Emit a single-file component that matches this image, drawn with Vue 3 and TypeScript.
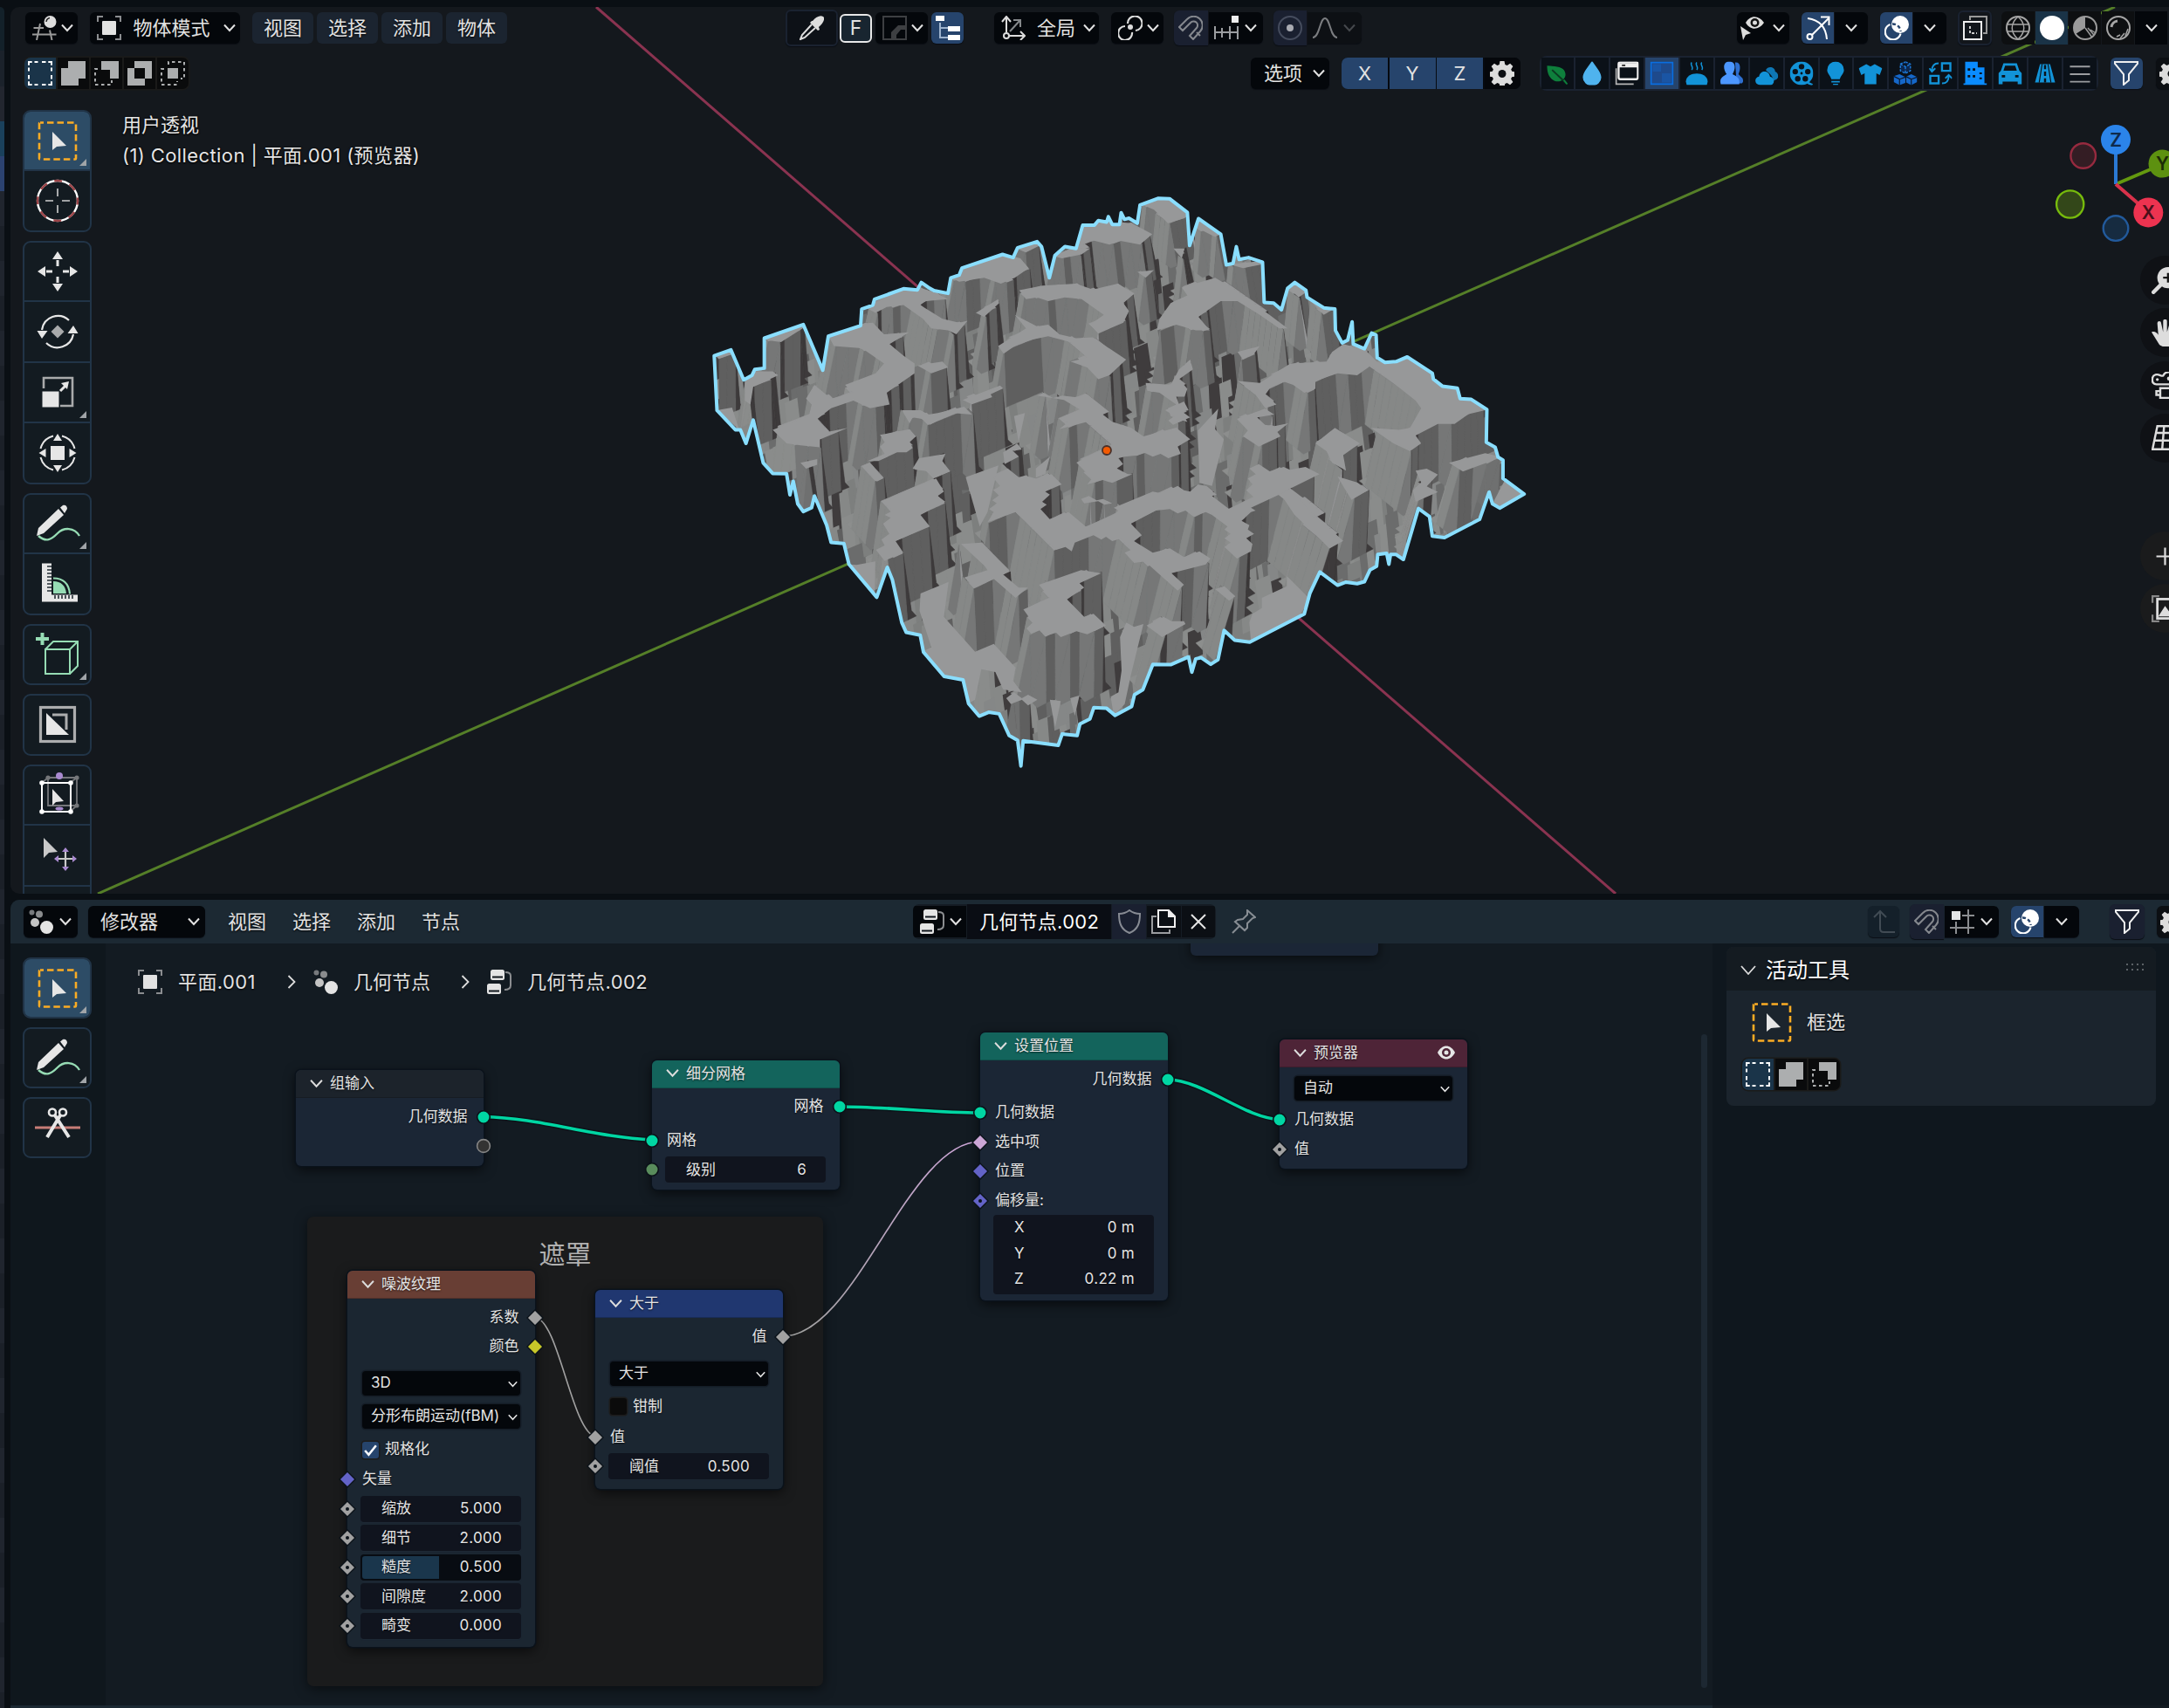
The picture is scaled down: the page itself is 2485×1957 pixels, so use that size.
<script setup lang="ts">
type Pt = [number, number]

/* ---------- terrain mesh ---------- */
const N = 64

function parse(s: string): Pt[] {
  return s.trim().split(/\s+/).map(p => p.split(',').map(Number) as Pt)
}
// detail shapes use a finer local grid over the lower middle of the terrain
function parseDetail(s: string): Pt[] {
  return parse(s).map(([x, y]) => [282.2 + 0.56 * x, 537.6 + 0.7467 * y] as Pt)
}

function homography(p0: Pt, p1: Pt, p2: Pt, p3: Pt) {
  const dx1 = p1[0] - p2[0], dx2 = p3[0] - p2[0], dx3 = p0[0] - p1[0] + p2[0] - p3[0]
  const dy1 = p1[1] - p2[1], dy2 = p3[1] - p2[1], dy3 = p0[1] - p1[1] + p2[1] - p3[1]
  const den = dx1 * dy2 - dx2 * dy1
  const g = (dx3 * dy2 - dx2 * dy3) / den
  const h = (dx1 * dy3 - dx3 * dy1) / den
  return (u: number, v: number): Pt => {
    const w = g * u + h * v + 1
    return [
      ((p1[0] - p0[0] + g * p1[0]) * u + (p3[0] - p0[0] + h * p3[0]) * v + p0[0]) / w,
      ((p1[1] - p0[1] + g * p1[1]) * u + (p3[1] - p0[1] + h * p3[1]) * v + p0[1]) / w,
    ]
  }
}

const ground = homography([55, 600], [611, 1518], [1515, 820], [878, 146])
const raised = homography([62, 463], [620, 1370], [1530, 680], [872, 55])

const plateaus: Pt[][] = [
  '825,75 860,56 880,56 912,97 905,112 875,125 850,90',
  '722,130 770,120 810,125 847,153 825,180 790,170 770,180 730,165 718,190 700,195',
  '670,210 700,190 735,190 720,205 685,215',
  '500,240 578,203 610,215 625,240 600,265 575,280 545,265 500,275 485,265',
  '603,190 640,170 645,182 620,200',
  '608,297 650,285 710,280 740,295 785,280 815,305 795,330 805,350 795,380 750,408 735,385 760,360 720,320 690,315 660,325 640,315 620,320',
  '330,340 400,293 430,290 460,305 480,320 440,325 430,335 470,370 500,380 515,375 495,410 480,400 450,395 435,370 400,335 370,340 350,355',
  '265,413 330,382 345,380 365,410 410,405 375,435 400,465 420,485 420,510 380,550 370,560 375,590 340,600 310,580 270,600 245,628 265,660 300,650 250,680 250,700 215,695 190,690 165,655 230,620 235,590 225,575 240,540 270,575 310,560 295,540 350,510 365,485 330,450 320,445 275,440',
  '425,490 470,480 480,495 450,510',
  '150,416 218,383 222,392 180,430 155,425',
  '58,465 90,448 95,460 68,470',
  '115,525 135,505 165,505 175,515 130,545 125,590 115,580',
  '570,440 620,395 600,360 640,390 660,385 680,410 710,420 740,418 800,475 770,515 750,525 730,495 700,480 730,470 700,430 660,415 610,430 580,460',
  '900,290 960,265 990,290 1020,320 1090,395 1075,395 1040,360 1000,325 970,325 930,365 950,400 925,400 890,385 855,400 860,370 880,330 910,310',
  '835,535 880,540 895,500 915,475 920,500 895,525 910,550 905,570 890,570 900,610 910,635 880,620 875,600 890,590 860,560 838,555',
  '1000,530 1040,535 1095,485 1160,480 1170,455 1190,435 1230,450 1250,480 1280,485 1305,465 1350,512 1398,548 1398,572 1425,577 1450,603 1415,615 1390,640 1360,640 1320,670 1330,690 1310,710 1280,690 1240,650 1290,655 1310,650 1330,600 1320,580 1240,490 1215,515 1180,510 1140,530 1140,550 1120,560 1100,540 1080,530 1060,545 1050,565 1070,590 1050,600 1030,560',
  '1000,455 1040,440 1030,460 1010,475',
  '1078,815 1095,805 1155,870 1135,870 1190,940 1165,960 1140,920',
  '1140,690 1175,650 1220,690 1190,720 1195,760 1170,740 1160,710',
  '1320,760 1340,755 1360,770 1340,800 1360,815 1320,840 1315,810 1330,790',
  '1380,740 1445,715 1475,725 1405,762',
  '1180,775 1215,790 1235,810 1205,835 1190,800',
  '820,250 850,245 835,265',
  '925,110 970,150 960,160 925,135',
  '985,230 1045,222 1045,230 1010,240',
  '1090,290 1103,275 1125,300 1110,315',
  '1125,315 1175,343 1155,360',
  '215,740 245,730 245,745 225,755',
  '530,355 570,320 572,330 545,365',
  '885,190 905,190 900,215',
].map(parse).concat([
  '400,55 520,5 530,15 490,35 495,45 430,70',
  '205,90 265,90 290,105 320,100 405,78 430,105 370,100 295,140 270,120 240,115 230,135',
  '135,175 230,155 250,180 230,200 240,220 220,235 190,235 130,265 95,265 150,240 135,215 150,200',
  '80,285 110,280 145,325 125,335',
  '240,290 260,255 345,240 335,265 360,300 315,320 290,300 250,295',
  '145,405 315,325 340,370 320,385 345,405 265,450 295,490 185,540 210,580 150,608 122,570 150,555 140,535 165,515 145,480 170,460 150,450 175,435',
  '530,235 575,205 590,225 560,230 580,250 535,275',
  '497,320 545,290 580,320 600,315 635,325 685,310 718,345 665,370 680,380 655,405 670,415 650,430 680,465 740,440 795,490 885,450 900,435 885,425 1010,370 1035,375 1060,365 1090,350 1110,365 1130,370 1155,345 1180,350 1215,380 1200,385 1255,430 1335,390 1310,365 1330,345 1315,325 1340,310 1320,290 1350,275 1385,300 1430,285 1450,295 1500,285 1545,310 1450,360 1420,378 1325,425 1340,435 1325,440 1295,470 1320,485 1315,500 1335,515 1310,530 1330,550 1325,575 1280,600 1240,560 1260,545 1240,530 1260,515 1240,500 1250,490 1200,450 1180,440 1140,455 1115,435 1090,445 1065,430 1020,435 940,480 975,520 950,540 1010,580 1065,565 1110,595 1160,575 1195,600 1180,620 1070,650 1110,690 1090,710 985,610 950,615 920,580 940,570 910,530 880,540 860,525 845,535 820,520 760,545 750,575 730,560 700,570 570,440 480,475 500,440 485,430 510,410 495,400 520,380 500,365 520,350',
  '1420,378 1450,362 1520,440 1510,448 1568,480 1568,555 1465,450',
  '765,270 830,235 870,215 880,205 800,130 710,155 740,130 715,120 780,90 725,55 640,40 660,30 690,48 720,40 760,45 800,35 870,95 850,105 880,130 940,150 980,180 1085,150 1130,190 1090,215 1100,240 1060,255 1035,240 1010,250 985,237 960,245 920,250 900,255 915,275 895,290 930,310 945,310 880,340 850,330 800,345 815,325',
  '780,395 805,385 830,400 850,395 880,410 855,415 835,403 790,410',
  '395,550 460,545 550,640 530,655 580,700 610,700 570,735 500,670 440,700 405,665 480,640 470,625',
  '645,690 780,640 845,650 775,685 790,700 735,740 790,800 820,790 860,830 800,860 765,850 715,870 700,855 670,865 650,845 620,858 605,840 625,820 595,775 680,735',
  '990,830 1045,800 1070,815 1110,815 1115,825 1040,870',
  '1210,705 1240,695 1275,730 1255,745',
  '540,1080 565,1060 590,1080 610,1068 640,1085 610,1105 590,1085 555,1100',
  '1280,120 1370,85 1400,105 1345,115 1370,140 1400,145 1445,135 1410,165 1420,180 1350,215 1300,180 1315,160',
  '1050,90 1110,60 1125,90 1105,95 1130,115 1075,140 1060,125 1080,110',
].map(parseDetail))

const join = (poly: Pt[]) => poly.map(p => p.join(',')).join(' ')

// flat valley floor left in the open
const floors: string[] = [
  '410,320 515,280 480,440 455,490',
  '265,720 355,680 340,800 440,920 500,893 570,975 562,1020 590,1060 530,1050 505,990 460,980 440,1085 415,1100 400,1040 340,1005 270,920 300,905 262,780',
  '1155,160 1220,85 1210,155 1238,190 1200,350 1160,340',
  '1330,790 1360,770 1360,735 1440,695 1440,660 1515,740 1475,805 1325,887 1320,820',
  '905,870 925,820 950,835 980,825 940,1000 920,1100 885,1140 875,1075 900,1060 910,985',
  '35,620 60,622 120,610 118,730 122,737',
  '565,110 600,100 580,200',
  '635,290 680,250 665,310 635,322',
  '680,1085 715,1090 697,1180',
  '745,1080 775,1070 760,1140',
].map(s => join(parseDetail(s))).concat([
  '1480,785 1515,820 1471,856 1458,845',
  '65,605 92,598 105,655',
])

function nearOrInside(p: Pt, poly: Pt[], tol: number): boolean {
  let inside = false
  for (let i = 0, j = poly.length - 1; i < poly.length; j = i++) {
    const [xi, yi] = poly[i], [xj, yj] = poly[j]
    if (yi > p[1] !== yj > p[1] && p[0] < ((xj - xi) * (p[1] - yi)) / (yj - yi) + xi) inside = !inside
    const dx = xj - xi, dy = yj - yi
    const t = Math.max(0, Math.min(1, ((p[0] - xi) * dx + (p[1] - yi) * dy) / (dx * dx + dy * dy || 1)))
    if (Math.hypot(p[0] - xi - t * dx, p[1] - yi - t * dy) < tol) return true
  }
  return inside
}

const high: boolean[][] = []
for (let i = 0; i <= N; i++) {
  high.push([])
  for (let j = 0; j <= N; j++) {
    const p = raised(i / N, j / N)
    high[i].push(plateaus.some(poly => nearOrInside(p, poly, 4.5)))
  }
}

// wall tones by facing direction, every 45 degrees from +u
const tones = ['#5f5f5f', '#3d3a3b', '#3d3a3b', '#6f7070', '#8a8c8b', '#8c8e8d', '#868887', '#767777']

interface Face { d: string; c: string }

// deep walls between the plateaus, as uneven vertical slivers
let seed = 7
const rnd = () => (seed = (seed * 16807) % 2147483647) / 2147483647
const slivers: Face[] = []
const deep = ['#868887', '#7d7f7e', '#8a8c8b', '#5f5f5f', '#868887', '#6b6c6c', '#8a8c8b', '#5f5f5f', '#3f3c3d', '#858787']
for (let y = 20; y < 1500; y += 85) {
  let x = 40
  while (x < 1520) {
    const w = 9 + rnd() * 20
    const top = y + rnd() * 60
    const len = 110 + rnd() * 90
    const lean = 6 + rnd() * 12
    slivers.push({
      d: `M${x.toFixed(1)} ${top.toFixed(1)}l${w.toFixed(1)} ${(-w * 0.6).toFixed(1)}l${lean.toFixed(1)} ${len.toFixed(1)}h${(-w - 3).toFixed(1)}z`,
      c: deep[Math.floor(rnd() * deep.length)],
    })
    x += w * 0.8
  }
}

const faces: Face[] = []
for (let i = 0; i < N; i++) {
  for (let j = N - 1; j >= 0; j--) {
    const at = (a: number, b: number): Pt => (high[a][b] ? raised : ground)(a / N, b / N)
    const h = [high[i][j], high[i + 1][j], high[i + 1][j + 1], high[i][j + 1]].map(Number)
    if (!(h[0] + h[1] + h[2] + h[3])) continue
    const nu = h[0] + h[3] - h[1] - h[2]
    const nv = h[0] + h[1] - h[2] - h[3]
    let c = '#979899'
    if (nu || nv) c = tones[(Math.round(Math.atan2(nv, nu) / (Math.PI / 4)) + 8) % 8]
    const q = [at(i, j), at(i + 1, j), at(i + 1, j + 1), at(i, j + 1)]
    const d = 'M' + q.map(p => p[0].toFixed(1) + ' ' + p[1].toFixed(1)).join('L') + 'Z'
    const last = faces[faces.length - 1]
    if (last && last.c === c) last.d += d
    else faces.push({ d, c })
  }
}
const tops = plateaus.map(join)

const outline =
  '60,465 90,450 113,527 128,515 133,500 150,497 150,420 220,385 255,502 265,415 323,388 325,345 345,335 348,320 400,293 425,296 432,277 445,290 455,298 480,305 485,265 500,258 505,240 578,205 597,213 605,188 640,172 648,185 662,265 672,208 690,185 710,190 722,130 743,130 750,118 765,122 768,108 775,128 788,128 791,98 797,115 805,112 820,125 825,78 858,61 878,62 910,97 914,182 930,113 970,153 980,232 992,228 998,185 1003,218 1020,213 1045,225 1048,328 1065,330 1079,347 1090,292 1103,277 1123,297 1125,315 1155,342 1175,345 1176,400 1188,432 1198,425 1206,378 1208,435 1228,447 1241,407 1249,412 1251,470 1265,482 1285,480 1305,468 1350,510 1352,525 1368,543 1395,548 1400,575 1420,577 1448,603 1447,687 1463,700 1468,725 1477,733 1477,780 1515,820 1471,856 1458,845 1452,815 1435,885 1372,932 1350,928 1345,878 1325,857 1298,988 1285,975 1275,975 1272,1000 1268,972 1252,975 1250,1005 1238,1015 1228,1045 1215,1050 1195,1046 1180,1054 1148,1020 1130,1075 1120,1128 1022,1200 995,1195 976,1170 965,1245 952,1257 935,1240 925,1243 918,1277 912,1238 880,1258 848,1257 830,1322 815,1335 810,1365 780,1388 765,1370 742,1368 735,1397 717,1410 712,1440 685,1436 678,1465 615,1453 611,1518 605,1452 590,1440 572,1384 553,1380 536,1390 517,1358 507,1297 473,1288 436,1226 430,1182 405,1175 397,1150 380,1040 371,1008 352,1085 302,1000 293,947 270,944 262,900 240,825 235,855 220,865 210,845 202,787 196,822 190,768 165,767 148,740 130,630 117,690 107,655 98,655 65,605'

/* ---------- toolbars ---------- */
interface Tool { icon: string; more?: boolean; on?: boolean }
const viewTools: Tool[][] = [
  [{ icon: 't-box', more: true, on: true }, { icon: 't-cursor' }],
  [{ icon: 't-move' }, { icon: 't-rotate' }, { icon: 't-scale', more: true }, { icon: 't-transform' }],
  [{ icon: 't-annotate', more: true }, { icon: 't-measure' }],
  [{ icon: 't-cube', more: true }],
  [{ icon: 't-plane' }],
  [{ icon: 't-cage' }, { icon: 't-push' }, { icon: 't-none' }],
]
const nodeTools: Tool[][] = [
  [{ icon: 't-box', more: true, on: true }],
  [{ icon: 't-annotate', more: true }],
  [{ icon: 't-cut' }],
]
const viewMenus = ['视图', '选择', '添加', '物体']
const nodeMenus = ['视图', '选择', '添加', '节点']
const selectModes = ['s-new', 's-add', 's-sub', 's-xor', 's-and']
const categories = ['leaf', 'drop', 'window', 'tile', 'steam', 'people', 'cloud', 'film', 'bulb', 'shirt', 'cubes', 'swap', 'building', 'car', 'road', 'lines']

/* ---------- node graph ---------- */
interface Row {
  kind: 'out' | 'in' | 'field' | 'drop' | 'check'
  label?: string
  value?: string
  sock?: 'dot' | 'dia' | 'ring' | 'none'
  color?: string
  on?: boolean
  fill?: number
  gap?: boolean
}
interface NodeBox {
  title: string; cls: string; x: number; y: number; h: number; rows: Row[]
  vec?: [string, string][]; eye?: boolean
}
const geo = '#00d6a3', grey = '#a1a1a1', vecc = '#6363c7'
const nodes: NodeBox[] = [
  { title: '组输入', cls: 'plain', x: 339, y: 1226, h: 110, rows: [
    { kind: 'out', label: '几何数据', sock: 'dot', color: geo },
    { kind: 'out', label: '', sock: 'ring', color: '#333' }] },
  { title: '细分网格', cls: 'teal', x: 747, y: 1214.5, h: 148, rows: [
    { kind: 'out', label: '网格', sock: 'dot', color: geo },
    { kind: 'in', label: '网格', sock: 'dot', color: geo, gap: true },
    { kind: 'field', label: '级别', value: '6', sock: 'dot', color: '#598c5c' }] },
  { title: '设置位置', cls: 'teal', x: 1123, y: 1183, h: 307, rows: [
    { kind: 'out', label: '几何数据', sock: 'dot', color: geo },
    { kind: 'in', label: '几何数据', sock: 'dot', color: geo, gap: true },
    { kind: 'in', label: '选中项', sock: 'dia', color: '#cca6d6' },
    { kind: 'in', label: '位置', sock: 'dia', color: vecc },
    { kind: 'in', label: '偏移量:', sock: 'dia', color: vecc, on: true }],
    vec: [['X', '0 m'], ['Y', '0 m'], ['Z', '0.22 m']] },
  { title: '预览器', cls: 'wine', x: 1466, y: 1191, h: 148, eye: true, rows: [
    { kind: 'drop', label: '自动' },
    { kind: 'in', label: '几何数据', sock: 'dot', color: geo },
    { kind: 'in', label: '值', sock: 'dia', color: grey, on: true }] },
  { title: '噪波纹理', cls: 'rust', x: 398, y: 1456, h: 430.5, rows: [
    { kind: 'out', label: '系数', sock: 'dia', color: grey },
    { kind: 'out', label: '颜色', sock: 'dia', color: '#c7c729' },
    { kind: 'drop', label: '3D', gap: true },
    { kind: 'drop', label: '分形布朗运动(fBM)' },
    { kind: 'check', label: '规格化', on: true },
    { kind: 'in', label: '矢量', sock: 'dia', color: vecc },
    { kind: 'field', label: '缩放', value: '5.000', sock: 'dia', color: grey, on: true },
    { kind: 'field', label: '细节', value: '2.000', sock: 'dia', color: grey, on: true },
    { kind: 'field', label: '糙度', value: '0.500', sock: 'dia', color: grey, on: true, fill: 48 },
    { kind: 'field', label: '间隙度', value: '2.000', sock: 'dia', color: grey, on: true },
    { kind: 'field', label: '畸变', value: '0.000', sock: 'dia', color: grey, on: true }] },
  { title: '大于', cls: 'blue', x: 682, y: 1478, h: 227.5, rows: [
    { kind: 'out', label: '值', sock: 'dia', color: grey },
    { kind: 'drop', label: '大于', gap: true },
    { kind: 'check', label: '钳制' },
    { kind: 'in', label: '值', sock: 'dia', color: grey },
    { kind: 'field', label: '阈值', value: '0.500', sock: 'dia', color: grey, on: true }] },
]
const canvasX = 121, canvasY = 1081
</script>

<template>
  <div class="app">
    <!-- icon library -->
    <svg class="defs" width="0" height="0">
      <symbol id="chev" viewBox="0 0 14 10"><path d="M1 1.500 7 8l6-6.500" fill="none" stroke="currentColor" stroke-width="2" /></symbol>
      <symbol id="view3d" viewBox="0 0 28 28"><path d="M1.500 14H13M0 21.500h27.500M9 9 5 28M20 16.500 22.500 28" fill="none" stroke="#9a9a9a" stroke-width="2" /><circle cx="20.500" cy="7" r="7" fill="#ddd" /><path d="M16 7a5 5 0 0 1 4-4.500" fill="none" stroke="#222" stroke-width="1.500" /></symbol>
      <symbol id="object" viewBox="0 0 28 28"><path d="M1 7V1h6M21 1h6v6M27 21v6h-6M7 27H1v-6" fill="none" stroke="#8b8d90" stroke-width="2" /><rect x="6" y="6" width="16" height="16" rx="1" fill="#e2e2e2" /></symbol>
      <symbol id="s-new" viewBox="0 0 28 28"><path d="M0 4V0h4M24 0h4v4M28 24v4h-4M4 28H0v-4" transform="translate(1 1) scale(.92857)" fill="none" stroke="#fff" stroke-width="2.200" /><path d="M7.500 1h4M16 1h4.500M7.500 27h4M16 27h4.500M1 7.500v4M1 16v4.500M27 7.500v4M27 16v4.500" stroke="#fff" stroke-width="2" /></symbol>
      <symbol id="s-add" viewBox="0 0 28 28"><path d="M8 0h20v20h-8v8H0V8h8z" fill="#acaeaf" /></symbol>
      <symbol id="s-sub" viewBox="0 0 28 28"><path d="M8 0h20v20h-10V10H8z" fill="#acaeaf" /><path d="M4 9H1v18h19v-5" fill="none" stroke="#acaeaf" stroke-width="2" stroke-dasharray="3.500 3.500" /></symbol>
      <symbol id="s-xor" viewBox="0 0 28 28"><path d="M8 0h20v20h-8v8H0V8h8zM8 8v12h12V8z" fill="#acaeaf" fill-rule="evenodd" /></symbol>
      <symbol id="s-and" viewBox="0 0 28 28"><path d="M9 4V1h18v19h-4M4 9H1v18h18v-4" fill="none" stroke="#acaeaf" stroke-width="2" stroke-dasharray="3.500 3.500" /><rect x="8" y="8" width="12" height="12" fill="#acaeaf" /></symbol>

      <symbol id="dropper" viewBox="0 0 28 28"><path d="M15 6c4-5 9-7 12-5s0 8-5 12l1 3-2 1-9-9 2-2z" fill="#ddd" /><path d="M14 10 3 22l-2 5 5-2 12-11" fill="none" stroke="#ddd" stroke-width="2" /></symbol>
      <symbol id="curvebox" viewBox="0 0 28 28"><rect x="1" y="1" width="26" height="26" fill="none" stroke="#3d3f42" stroke-width="2" /><path d="M10 26v-7l8-8h9v5h-6l-5 6v4z" fill="#3d3f42" /></symbol>
      <symbol id="tree" viewBox="0 0 28 28"><path d="M5 8v17h10M5 14h10" fill="none" stroke="#9db2cc" stroke-width="2" /><path d="M0 0h10v6H0zM14 12h14v6H14zM14 22h14v6H14z" fill="#fff" /></symbol>
      <symbol id="axes" viewBox="0 0 28 28"><path d="M10 18 21 6M14 5h8v8" fill="none" stroke="#85888b" stroke-width="2" /><path d="M6 19V1M1 7l5-6 5 6M9 23h18M22 18l5 5-5 5" fill="none" stroke="#ddd" stroke-width="2" /><circle cx="6" cy="23" r="3" fill="none" stroke="#ddd" stroke-width="2" /></symbol>
      <symbol id="pivot" viewBox="0 0 28 28"><path d="M8 12a8 8 0 1 0 8 7" fill="none" stroke="#ddd" stroke-width="2.200" /><path d="M11 9a8.300 8.300 0 1 1 9 8" fill="none" stroke="#ddd" stroke-width="2.200" /><circle cx="14" cy="13" r="3" fill="#ddd" /></symbol>
      <symbol id="magnet" viewBox="0 0 28 28"><path d="M1 13 10 4a10 10 0 0 1 15 14l-8 9-4-4 8-9a4.500 4.500 0 0 0-7-6l-9 9zM21 19l4 4" fill="none" stroke="currentColor" stroke-width="2" /></symbol>
      <symbol id="incr" viewBox="0 0 28 28"><path d="M1 12v15M9 14v11M18 12v15M27 12v15M1 19h26" fill="none" stroke="#9b9da0" stroke-width="2" /><rect x="20" y="0" width="8" height="8" fill="#eee" /></symbol>
      <symbol id="prop" viewBox="0 0 28 28"><circle cx="14" cy="14" r="13" fill="none" stroke="#454c5d" stroke-width="2" /><circle cx="14" cy="14" r="4" fill="#a9abb2" /></symbol>
      <symbol id="bell" viewBox="0 0 28 28"><path d="M0 25c8 0 8-22 14-22s6 22 14 22" fill="none" stroke="#7b7d80" stroke-width="2" /></symbol>
      <symbol id="eyecur" viewBox="0 0 28 28"><path d="M6 8c5-9 15-9 21 0-6 9-16 9-21 0z" fill="#ddd" /><circle cx="16.500" cy="8" r="5" fill="#111" /><circle cx="16.500" cy="8" r="2.500" fill="#ddd" /><path d="m0 12 12 8-6 2-3 6z" fill="#ddd" /></symbol>
      <symbol id="gizmo" viewBox="0 0 28 28"><path d="M2 3c14 2 21 10 22 24" fill="none" stroke="#fff" stroke-width="2" /><path d="M7 22 26 3M17 1.500h9.500V11" fill="none" stroke="#fff" stroke-width="2" /><circle cx="4.500" cy="24" r="3" fill="none" stroke="#fff" stroke-width="2" /></symbol>
      <symbol id="overlay" viewBox="0 0 28 28"><circle cx="18" cy="10" r="10" fill="#fff" /><path d="M9 9.500A9 9 0 0 1 18.500 18" fill="none" stroke="#26446c" stroke-width="2.400" stroke-dasharray="4 2.500" /><path d="M6.500 10A9 9 0 1 0 18.500 20.500" fill="none" stroke="#fff" stroke-width="2.200" /></symbol>
      <symbol id="xray" viewBox="0 0 28 28"><path d="M8 5V1h19v19h-4" fill="none" stroke="#999" stroke-width="2" /><rect x="1" y="7" width="20" height="20" fill="none" stroke="#eee" stroke-width="2" /><path d="M8 12v8h8" fill="none" stroke="#ccc" stroke-width="2" stroke-dasharray="3 2" /></symbol>
      <symbol id="wire" viewBox="0 0 28 28"><circle cx="14" cy="14" r="13" fill="none" stroke="#a5a5a5" stroke-width="2" /><path d="M2 10h24M2 18h24M14 1c-9 8-9 18 0 26M14 1c9 8 9 18 0 26" fill="none" stroke="#a5a5a5" stroke-width="1.500" /></symbol>
      <symbol id="solid" viewBox="0 0 28 28"><circle cx="14" cy="14" r="14" fill="#fff" /></symbol>
      <symbol id="matprev" viewBox="0 0 28 28"><circle cx="14" cy="14" r="13" fill="none" stroke="#9a9a9a" stroke-width="2" /><path d="M14 14V1A13 13 0 0 0 3 21z" fill="#9a9a9a" /><path d="m14 14 8 11M17 14l7 8M20 16l6 4" stroke="#9a9a9a" stroke-width="1.500" /></symbol>
      <symbol id="rendered" viewBox="0 0 28 28"><circle cx="14" cy="14" r="13" fill="none" stroke="#a5a5a5" stroke-width="2" /><path d="M6 13a8 8 0 0 1 7-7" fill="none" stroke="#a5a5a5" stroke-width="3" /><path d="m12 24 4-2m0 4 5-6m1 3 3-8" stroke="#a5a5a5" stroke-width="1.500" /></symbol>
      <symbol id="gear" viewBox="0 0 28 28"><path d="M11.500 0h5l.8 4 2.400 1 3.400-2.300 3.300 3.400-2.200 3.400 1 2.300 3.800.7v5l-3.900.8-1 2.300 2.300 3.400-3.400 3.300-3.400-2.200-2.300 1-.8 3.900h-5l-.7-3.900-2.400-1L5 27.300 1.600 24l2.300-3.400-1-2.300L-1 17.500v-5l3.900-.7 1-2.300L1.600 6 5 2.700 8.400 5l2.400-1z" fill="#dcdcdc" /><circle cx="14" cy="14.500" r="4.500" fill="#0b0e12" /></symbol>
      <symbol id="funnel" viewBox="0 0 28 28"><path d="M1 1h26v2L17 15v7l-6 5V15L1 3z" fill="none" stroke="#f0f0f0" stroke-width="2" /></symbol>

      <symbol id="leaf" viewBox="0 0 28 28"><path d="M2 5c12 1 21 1 22 10 0 7-7 10-13 8C4 20 2 13 2 5z" fill="#0e7f3c" /><path d="m8 10 17 16" stroke="#0b3a22" stroke-width="2" /><path d="m22 22 4 5" stroke="#0e7f3c" stroke-width="2" /></symbol>
      <symbol id="drop" viewBox="0 0 28 28"><path d="M14-1c5 8 11 14 11 20a11 10 0 0 1-22 0c0-6 6-12 11-20z" fill="#4fb3ee" /></symbol>
      <symbol id="window" viewBox="0 0 28 28"><path d="M1 8v19h21" fill="none" stroke="#b5b5b5" stroke-width="2" /><rect x="4" y="1" width="23" height="20" rx="2" fill="none" stroke="#eee" stroke-width="2.500" /><path d="M4 2h23v5H4z" fill="#eee" /><path d="M8 4.500h4" stroke="#222" stroke-width="2" /></symbol>
      <symbol id="tile" viewBox="0 0 28 28"><rect x="1" y="1" width="26" height="26" fill="#1e4a8c" stroke="#0a6ee0" stroke-width="2" /><path d="M3 3h10v9H3zM14 14h11v11H14z" fill="#1a55a4" /></symbol>
      <symbol id="steam" viewBox="0 0 28 28"><path d="M8 1c-3 3 3 5 0 9M14 1c-3 3 3 5 0 9M20 1c-3 3 3 5 0 9" fill="none" stroke="#1293d8" stroke-width="1.500" /><path d="M1 24c0-13 26-13 26 0l-1 4H2z" fill="#1293d8" /></symbol>
      <symbol id="people" viewBox="0 0 28 28"><path d="M18 1c7-1 7 8 4 14l5 5c1 3 1 5-1 6h-6z" fill="#2e6fd0" /><path d="M11 0c8 0 8 8 4 15 6 3 9 5 8 12H1c-2-7 2-9 7-12C3 8 4 0 11 0z" fill="#4c97ff" /></symbol>
      <symbol id="cloud" viewBox="0 0 28 28"><path d="M13 10c3-6 12-3 11 2 4 1 5 7 2 9l-4 2c-1-7-4-8-9-13z" fill="#0e77b5" /><path d="M6 28c-7-1-7-9-1-10 1-8 12-8 13 0 6 1 6 9 1 10z" fill="#1293d8" /></symbol>
      <symbol id="film" viewBox="0 0 28 28"><circle cx="14" cy="14" r="14" fill="#1293d8" /><g fill="#0b1219"><circle cx="14" cy="6" r="3.300" /><circle cx="6.500" cy="12" r="3.300" /><circle cx="21.500" cy="12" r="3.300" /><circle cx="9.500" cy="20.500" r="3.300" /><circle cx="18.500" cy="20.500" r="3.300" /><circle cx="14" cy="14" r="1.500" /></g><path d="m21 25 6 3" stroke="#1293d8" stroke-width="2.500" /></symbol>
      <symbol id="bulb" viewBox="0 0 28 28"><path d="M14 0a10 10 0 0 1 10 10c0 4-4 7-5 11H9C8 17 4 14 4 10A10 10 0 0 1 14 0zM9 23h10v2H9zM11 26.500h6V28h-6z" fill="#1293d8" /></symbol>
      <symbol id="shirt" viewBox="0 0 28 28"><path d="m9 3 5 3 5-3 9 5-3 8-4-2v13H7V14l-4 2-3-8z" fill="#1293d8" /></symbol>
      <symbol id="cubes" viewBox="0 0 28 28"><path d="m7 15 7 3.500v7L7 28l-7-3.500v-7zM21 15l7 3.500v6L21 28l-6-3v-7z" fill="#1567c8" /><path d="M0 17.500 7 21v7M14 18.500 7 21M15 18l6 3v7M28 18.500 21 21" fill="none" stroke="#0b1a30" stroke-width="1.300" /><path d="m14 0 6 3v8l-6 3-6-3V3zM8 3l6 3 6-3M14 6v8" fill="#0c2750" stroke="#1f7fe0" stroke-width="1.400" stroke-dasharray="3 1.500" /></symbol>
      <symbol id="swap" viewBox="0 0 28 28"><path d="M16 2h10v9H16zM2 17h10v9H2z" fill="none" stroke="#1293d8" stroke-width="2.500" /><path d="M12 2C6 2 4 5 4 11M1 8l3 4 4-4M16 26c6 0 8-3 8-9M20 20l4-4 4 4" fill="none" stroke="#1293d8" stroke-width="2" /></symbol>
      <symbol id="building" viewBox="0 0 28 28"><path d="M2 0h15v7h8v19h3v2H-1v-2h3z" fill="#0a8cff" /><path d="M5 8h3v3H5zM11 8h3v3h-3zM5 16h3v3H5zM11 16h3v3h-3zM19 13h3v2h-3zM19 19h3v2h-3z" fill="#0b1219" /></symbol>
      <symbol id="car" viewBox="0 0 28 28"><path d="M6 2h16l3 9 3 3v13h-5v-3H5v3H0V14l3-3z" fill="#1293d8" /><path d="M8 5h12l2 6H6zM4 16h4v3H4zM20 16h4v3h-4z" fill="#0b1219" /></symbol>
      <symbol id="road" viewBox="0 0 28 28"><path d="M8 3h12l6 22H2z" fill="#1293d8" /><path d="M14 4v5M14 12v5M14 20v5" stroke="#0b1219" stroke-width="2.500" /><path d="M10.500 3 7 25M17.500 3 21 25" stroke="#0b1219" stroke-width="1.200" /></symbol>
      <symbol id="lines" viewBox="0 0 28 28"><path d="M2 6h24M2 15h24M2 24h24" stroke="#9b9da0" stroke-width="2" /></symbol>

      <symbol id="geonodes" viewBox="0 0 28 28"><circle cx="3.500" cy="3.500" r="3" fill="#777a7d" /><circle cx="12" cy="5.500" r="4" fill="#8a8c8e" /><circle cx="7" cy="15" r="5" fill="#c4c4c4" /><circle cx="20.500" cy="20.500" r="7.500" fill="#e4e4e4" /></symbol>
      <symbol id="nodetree" viewBox="0 0 28 28"><path d="M21 3c4 0 6 1 6 4v11c0 4-3 5-7 5" fill="none" stroke="#8b8d90" stroke-width="2" /><rect x="4" y="0" width="16" height="12" rx="2.500" fill="#e4e4e4" /><rect x="0" y="16" width="16" height="12" rx="2.500" fill="#e4e4e4" /><path d="M6 8.500h12M2 24.500h12" stroke="#10161c" stroke-width="2" /></symbol>
      <symbol id="shield" viewBox="0 0 28 28"><path d="M14 1c4 3 8 4 12 4 0 10-2 18-12 22C4 23 2 15 2 5c4 0 8-1 12-4z" fill="none" stroke="#878b93" stroke-width="2" /></symbol>
      <symbol id="copy" viewBox="0 0 28 28"><path d="M6 8H1v19h20v-4" fill="none" stroke="#9a9c9f" stroke-width="2" /><path d="M8 1h12l7 7v12H8z" fill="none" stroke="#eee" stroke-width="2" /><path d="M19 0v9h9z" fill="#eee" /></symbol>
      <symbol id="cross" viewBox="0 0 28 28"><path d="m6 6 16 16M22 6 6 22" stroke="#e6e6e6" stroke-width="2" /></symbol>
      <symbol id="pin" viewBox="0 0 28 28"><path d="m18 1 9 8-3 1-6 6v5l-3 3L4 14l3-2 6-1 5-5zM9 19l-8 8" fill="none" stroke="#878d93" stroke-width="2" /></symbol>
      <symbol id="up" viewBox="0 0 28 28"><path d="M10 2v20q0 4 4 4h13M3 9l7-7 7 7" fill="none" stroke="#414b54" stroke-width="2" /></symbol>
      <symbol id="gridsnap" viewBox="0 0 28 28"><path d="M7 14v14M21 0v28M0 21h28M14 7h14" fill="none" stroke="#8b8d90" stroke-width="2" /><rect x="2" y="2" width="10" height="10" fill="#e4e4e4" /></symbol>
      <symbol id="zoomin" viewBox="0 0 28 28"><circle cx="17" cy="11" r="11" fill="#ddd" /><path d="m10 18-8 8" stroke="#ddd" stroke-width="4" stroke-linecap="round" /><path d="M17 6v10M12 11h10" stroke="#111" stroke-width="2" /></symbol>
      <symbol id="hand" viewBox="0 0 28 28"><path d="M0 13c3-1 5 0 7 3L6 4c0-3 4-3 4 0l2 9V2c0-3 4-3 4 0v11l3-10c1-3 4-2 4 1l-2 10 4-5c2-2 4 0 3 2l-6 14c-3 5-11 4-14 1z" fill="#ddd" /></symbol>
      <symbol id="camera" viewBox="0 0 28 28"><path d="M4 3c4-1 6 2 8 1 3-6 12-4 12 2 0 5-3 7-7 7H5C-1 13 0 4 4 3zM9 17h14v10H9zM9 20H5v4h4M23 20l4-2v8l-4-2" fill="none" stroke="#ddd" stroke-width="2.200" /><circle cx="6" cy="8" r="1.500" fill="#ddd" /><circle cx="18" cy="7" r="2" fill="#ddd" /></symbol>
      <symbol id="persp" viewBox="0 0 28 28"><path d="M6 2h20l4 24H1zM4 9h24M3 17h26M13 2l-2 24M20 2l1 24" fill="none" stroke="#ddd" stroke-width="2.200" /></symbol>
      <symbol id="plus" viewBox="0 0 28 28"><path d="M14 5v18M5 14h18" stroke="#ddd" stroke-width="2" /></symbol>
      <symbol id="image" viewBox="0 0 28 28"><path d="M1 8V1h7M1 20v7h7" fill="none" stroke="#888" stroke-width="2" /><rect x="6" y="4" width="20" height="20" fill="none" stroke="#ddd" stroke-width="2.500" /><path d="m7 22 7-11 5 7 2-2 4 6z" fill="#ddd" /></symbol>

      <symbol id="t-none" viewBox="0 0 56 56" />
      <symbol id="t-box" viewBox="0 0 56 56"><rect x="7" y="7.500" width="42" height="42" rx="1" fill="none" stroke="#fbac24" stroke-width="2.600" stroke-dasharray="7.500 4" stroke-dashoffset="3.500" /><path d="M22 18v21l5-4 11-1z" fill="#e6e6e6" /></symbol>
      <symbol id="t-cursor" viewBox="0 0 56 56"><circle cx="28" cy="28" r="23" fill="none" stroke="#fff" stroke-width="2.400" /><circle cx="28" cy="28" r="23" fill="none" stroke="#9c4347" stroke-width="2.400" stroke-dasharray="9.030 9.030" stroke-dashoffset="4.500" /><path d="M28 14v9M28 33v9M14 28h9M33 28h9" stroke="#d0d0d0" stroke-width="1.600" /></symbol>
      <symbol id="t-move" viewBox="0 0 56 56"><path d="m28 5 6 9H22zM28 51l6-9H22zM5 28l9-6v12zM51 28l-9-6v12z" fill="#e6e6e6" /><path d="M28 15v7M28 34v7M15 28h7M34 28h7" stroke="#e6e6e6" stroke-width="3" /></symbol>
      <symbol id="t-rotate" viewBox="0 0 56 56"><path d="M10 26a18.500 18.500 0 0 1 31-11M46 31a18.500 18.500 0 0 1-31 10" fill="none" stroke="#e6e6e6" stroke-width="2.200" /><path d="M4.500 27h12L10 36zM39.500 30h12L46 21z" fill="#e6e6e6" /><path d="m28 20.500 7.500 7.500-7.500 7.500-7.500-7.500z" fill="#a9aaab" /></symbol>
      <symbol id="t-scale" viewBox="0 0 56 56"><path d="M12 24V12h33v32H31" fill="none" stroke="#a9aaab" stroke-width="2.600" /><path d="M10.500 27.500h19v18h-19z" fill="#e6e6e6" /><path d="m31 27 6-6" stroke="#e6e6e6" stroke-width="3" /><path d="m41 16-9 2 7 7z" fill="#e6e6e6" /></symbol>
      <symbol id="t-transform" viewBox="0 0 56 56"><path d="M8.500 23A20.500 20.500 0 0 1 23 8.500M33 8.500A20.500 20.500 0 0 1 47.500 23M47.500 33A20.500 20.500 0 0 1 33 47.500M23 47.500A20.500 20.500 0 0 1 8.500 33" fill="none" stroke="#e6e6e6" stroke-width="2" /><path d="m28 6 5 8H23zM28 50l5-8H23zM6.500 28l8-5v10zM49.500 28l-8-5v10zM20 20h16v16H20z" fill="#e6e6e6" /></symbol>
      <symbol id="t-annotate" viewBox="0 0 56 56"><path d="M6 42c9 8 15 4 22-3s19-7 25 3" fill="none" stroke="#96dcb4" stroke-width="2.400" /><path d="m4 42 2-9L29 11l6 7-23 21zM31 9.500l3-2.500c3-1 5 1 5 4l-3 5z" fill="#e6e6e6" /></symbol>
      <symbol id="t-measure" viewBox="0 0 56 56"><path d="M10 4.500h11v36h30v8H10z" fill="#e6e6e6" /><path d="M23 39V25c9 0 14 5 15 14z" fill="#96dcb4" /><path d="M23 21.500c12 0 18 7 19 18" fill="none" stroke="#96dcb4" stroke-width="2.200" /><path d="M16 8h5M16 12h5M16 16h5M16 20h5M16 24h5M16 28h5M16 32h5M16 36h5M25 41v4M29 41v4M33 41v4M37 41v4M41 41v4M45 41v4" stroke="#222c33" stroke-width="1.600" /></symbol>
      <symbol id="t-cube" viewBox="0 0 56 56"><path d="M14 22h28v28H14zM14 22l9-9h28v28l-9 9M42 22l9-9" fill="none" stroke="#96dcb4" stroke-width="2" /><path d="M10.500 3v14M3 10h15" stroke="#96dcb4" stroke-width="4" /></symbol>
      <symbol id="t-plane" viewBox="0 0 56 56"><rect x="8.500" y="8.500" width="39" height="39" fill="none" stroke="#acadae" stroke-width="3.200" /><path d="M22 17h16v17" fill="none" stroke="#acadae" stroke-width="3" /><path d="M15 15v25h26z" fill="#e6e6e6" /></symbol>
      <symbol id="t-cage" viewBox="0 0 56 56"><path d="M17 8h33v32H17zM10 14l7-6M42 14l8-6M42 47l8-7" fill="none" stroke="#75777a" stroke-width="1.800" /><g fill="#75777a"><circle cx="17" cy="8" r="2.600" /><circle cx="50" cy="8" r="2.600" /><circle cx="50" cy="40" r="2.600" /></g><path d="M10 14h33v33H10z" fill="none" stroke="#fff" stroke-width="2" /><g fill="#fff"><circle cx="10" cy="14" r="2.800" /><circle cx="43" cy="14" r="2.800" /><circle cx="10" cy="47" r="2.800" /><circle cx="43" cy="47" r="2.800" /></g><path d="M22 21v19l4-4 9-1z" fill="#e6e6e6" /><circle cx="30" cy="6" r="4" fill="#a98ad0" /><ellipse cx="30" cy="43.500" rx="4.500" ry="2" fill="#a98ad0" /></symbol>
      <symbol id="t-push" viewBox="0 0 56 56"><path d="M12 8v23l6-6 10-1z" fill="#c9c9c9" /><path d="M37 24v18M28 32h18" stroke="#c9c9c9" stroke-width="2.200" /><path d="m37 19 4 5h-8zM37 46l4-5h-8zM24 32l5-4v8zM50 32l-5-4v8z" fill="#a98ad0" /></symbol>
      <symbol id="t-cut" viewBox="0 0 56 56"><path d="M2 28h52" stroke="#c77c77" stroke-width="3" /><path d="M25 14 41 39M31 14 16 39" stroke="#e6e6e6" stroke-width="4" /><circle cx="22" cy="10.500" r="4" fill="none" stroke="#e6e6e6" stroke-width="2.600" /><circle cx="34" cy="10.500" r="4" fill="none" stroke="#e6e6e6" stroke-width="2.600" /></symbol>
    </svg>

    <aside class="strip" />

    <main class="editors">
      <!-- 3D viewport -->
      <section class="viewport">
        <svg class="scene" viewBox="12 8 2473 1016">
          <defs>
            <clipPath id="terrain"><polygon :points="outline" /></clipPath>
          </defs>
          <path d="M683 8 1851 1024" stroke="#8a3350" stroke-width="3" />
          <path d="M112 1024 2423 8" stroke="#557f28" stroke-width="3" />
          <g transform="translate(780 200) scale(.63776 .44643)">
            <polygon :points="outline" fill="#7f8180" />
            <g clip-path="url(#terrain)">
              <path v-for="(f, k) in slivers" :key="'s' + k" :d="f.d" :fill="f.c" />
              <path v-for="(f, k) in faces" :key="k" :d="f.d" :fill="f.c" :stroke="f.c" stroke-width=".7" stroke-linejoin="round" />
              <polygon v-for="(p, k) in floors" :key="'f' + k" :points="p" fill="#979899" />
              <polygon v-for="(p, k) in tops" :key="'t' + k" :points="p" fill="#979899" />
            </g>
            <polygon class="sel" :points="outline" />
          </g>
          <circle cx="1268" cy="516" r="5" fill="#f25a02" stroke="#4a3028" stroke-width="1.800" />
          <g class="axis">
            <path d="M2424 211 2478 188" stroke="#64990f" stroke-width="4" />
            <path d="M2424 211V160" stroke="#2b79d4" stroke-width="4" />
            <path d="M2424 211 2461 243" stroke="#d9324b" stroke-width="4" />
            <circle cx="2386.700" cy="178.500" r="14.300" fill="#341d24" stroke="#962a3f" stroke-width="2.400" />
            <circle cx="2371.700" cy="234" r="15.600" fill="#334719" stroke="#77bb0c" stroke-width="2.400" />
            <circle cx="2424" cy="261.600" r="14.300" fill="#162b40" stroke="#225a9c" stroke-width="2.400" />
            <circle cx="2424" cy="160" r="17" fill="#2b84ea" />
            <circle cx="2477.500" cy="187.600" r="16" fill="#5d9110" />
            <circle cx="2461.300" cy="243.400" r="17" fill="#ed3350" />
            <text x="2424" y="167.500" fill="#0e2a4c">Z</text>
            <text x="2477.500" y="195" fill="#1c2c06">Y</text>
            <text x="2461.300" y="251" fill="#4c0f1a">X</text>
          </g>
        </svg>

        <header class="row r1">
          <button class="b w60"><svg class="i"><use href="#view3d" /></svg><svg class="c"><use href="#chev" /></svg></button>
          <button class="b mode"><svg class="i"><use href="#object" /></svg><span>物体模式</span><svg class="c"><use href="#chev" /></svg></button>
          <nav class="menus"><button v-for="m in viewMenus" :key="m">{{ m }}</button></nav>

          <button class="b w60 dropper"><svg class="i"><use href="#dropper" /></svg></button>
          <button class="fake">F</button>
          <button class="b w60 g4"><svg class="i"><use href="#curvebox" /></svg><svg class="c"><use href="#chev" /></svg></button>
          <button class="b on w37 g4"><svg class="i"><use href="#tree" /></svg></button>
          <button class="b orient"><svg class="i"><use href="#axes" /></svg><span>全局</span><svg class="c"><use href="#chev" /></svg></button>
          <button class="b w60 g14"><svg class="i"><use href="#pivot" /></svg><svg class="c"><use href="#chev" /></svg></button>
          <button class="b navy left g12 dim"><svg class="i"><use href="#magnet" /></svg></button>
          <button class="b right w62"><svg class="i"><use href="#incr" /></svg><svg class="c"><use href="#chev" /></svg></button>
          <button class="b navy left g12"><svg class="i"><use href="#prop" /></svg></button>
          <button class="b right w62 faint"><svg class="i"><use href="#bell" /></svg><svg class="c"><use href="#chev" /></svg></button>

          <button class="b w60 vis"><svg class="i"><use href="#eyecur" /></svg><svg class="c"><use href="#chev" /></svg></button>
          <button class="b on left w37 g14"><svg class="i"><use href="#gizmo" /></svg></button>
          <button class="b right w38"><svg class="c"><use href="#chev" /></svg></button>
          <button class="b on left w37 g14"><svg class="i"><use href="#overlay" /></svg></button>
          <button class="b right w38"><svg class="c"><use href="#chev" /></svg></button>
          <button class="b outlined g13"><svg class="i"><use href="#xray" /></svg></button>
          <div class="shading">
            <span><svg class="i"><use href="#wire" /></svg></span>
            <span class="cur"><svg class="i"><use href="#solid" /></svg></span>
            <span><svg class="i"><use href="#matprev" /></svg></span>
            <span><svg class="i"><use href="#rendered" /></svg></span>
            <span class="last"><svg class="c"><use href="#chev" /></svg></span>
          </div>
        </header>

        <div class="row r2">
          <div class="modes"><span v-for="(s, k) in selectModes" :key="s" :class="{ cur: k === 0 }"><svg class="i"><use :href="'#' + s" /></svg></span></div>
          <button class="b options"><span>选项</span><svg class="c"><use href="#chev" /></svg></button>
          <div class="xyz"><span>X</span><span>Y</span><span>Z</span><i><svg class="i"><use href="#gear" /></svg></i></div>
          <div class="cats"><span v-for="(c, k) in categories" :key="c" :class="{ cur: k === 3 }"><svg class="i"><use :href="'#' + c" /></svg></span></div>
          <button class="b on w37 g14"><svg class="i"><use href="#funnel" /></svg></button>
          <button class="b edge"><svg class="i"><use href="#gear" /></svg></button>
        </div>

        <div class="stage">
          <div class="tools">
            <div v-for="(g, k) in viewTools" :key="k" class="tgroup">
              <span v-for="t in g" :key="t.icon" class="tool" :class="{ on: t.on, more: t.more }"><svg><use :href="'#' + t.icon" /></svg></span>
            </div>
          </div>
          <div class="info"><p>用户透视</p><p class="wide">(1) Collection <b>|</b> 平面.001 (预览器)</p></div>
          <div class="navbtns">
            <span v-for="n in ['zoomin', 'hand', 'camera', 'persp']" :key="n"><svg class="i"><use :href="'#' + n" /></svg></span>
            <span class="far warm"><svg class="i"><use href="#plus" /></svg></span>
            <span class="warm"><svg class="i"><use href="#image" /></svg></span>
          </div>
        </div>
      </section>

      <!-- geometry node editor -->
      <section class="nodeed">
        <header class="nhead">
          <button class="b w62"><svg class="i"><use href="#geonodes" /></svg><svg class="c"><use href="#chev" /></svg></button>
          <button class="b modifier"><span>修改器</span><svg class="c"><use href="#chev" /></svg></button>
          <nav class="nmenus"><span v-for="m in nodeMenus" :key="m">{{ m }}</span></nav>
          <div class="idblock">
            <span class="pick"><svg class="i"><use href="#nodetree" /></svg><svg class="c"><use href="#chev" /></svg></span>
            <span class="name">几何节点.002</span>
            <span class="sh"><svg class="i"><use href="#shield" /></svg></span>
            <span class="cp"><svg class="i"><use href="#copy" /></svg></span>
            <span class="cp"><svg class="i"><use href="#cross" /></svg></span>
          </div>
          <svg class="i pin"><use href="#pin" /></svg>
          <button class="b up"><svg class="i"><use href="#up" /></svg></button>
          <button class="b navy left g12 dim"><svg class="i"><use href="#magnet" /></svg></button>
          <button class="b right w62"><svg class="i"><use href="#gridsnap" /></svg><svg class="c"><use href="#chev" /></svg></button>
          <button class="b on left w37 g14"><svg class="i"><use href="#overlay" /></svg></button>
          <button class="b right w39"><svg class="c"><use href="#chev" /></svg></button>
          <button class="b navy nfilter"><svg class="i"><use href="#funnel" /></svg></button>
          <button class="b edge"><svg class="i"><use href="#gear" /></svg></button>
        </header>

        <div class="nbody">
          <div class="ntools">
            <div v-for="(g, k) in nodeTools" :key="k" class="tgroup">
              <span v-for="t in g" :key="t.icon" class="tool" :class="{ on: t.on, more: t.more }"><svg><use :href="'#' + t.icon" /></svg></span>
            </div>
          </div>

          <div class="canvas">
            <div class="crumbs">
              <svg class="i"><use href="#object" /></svg><span>平面.001</span>
              <svg class="sep" viewBox="0 0 10 16"><path d="m1.500 1 7 7-7 7" /></svg>
              <svg class="i"><use href="#geonodes" /></svg><span class="tight">几何节点</span>
              <svg class="sep" viewBox="0 0 10 16"><path d="m1.500 1 7 7-7 7" /></svg>
              <svg class="i"><use href="#nodetree" /></svg><span>几何节点.002</span>
            </div>

            <div class="stray" />
            <div class="frame"><h3>遮罩</h3></div>

            <svg class="links" viewBox="121 1081 1841 873">
              <defs>
                <linearGradient id="lk" x1="0" x2="1"><stop offset=".1" stop-color="#a1a1a1" /><stop offset=".9" stop-color="#cca6d6" /></linearGradient>
              </defs>
              <g v-for="(d, k) in ['M554 1279.500C620 1281 680 1303 747 1306', 'M962 1268C1015 1268 1070 1275 1123 1275', 'M1338 1237C1380 1238 1425 1281 1466 1282.500']" :key="k" fill="none">
                <path :d="d" stroke="#0c1319" stroke-width="6.500" />
                <path :d="d" stroke="#00d6a3" stroke-width="3.600" />
              </g>
              <path d="M613 1509.500C640 1512 655 1640 682 1646" fill="none" stroke="#a1a1a1" stroke-width="1.600" />
              <path d="M897 1531C980 1531 1040 1308 1123 1308" fill="none" stroke="url(#lk)" stroke-width="1.600" />
            </svg>

            <article v-for="n in nodes" :key="n.title + n.x" class="node" :class="n.cls" :style="{ left: n.x - canvasX + 'px', top: n.y - canvasY + 'px', height: n.h + 'px' }">
              <h4><svg class="hc" viewBox="0 0 14 10"><path d="m1 1.500 6 6.500 6-6.500" /></svg>{{ n.title }}
                <svg v-if="n.eye" class="eye" viewBox="0 0 20 16"><path d="M0 8c5-10 15-10 20 0-5 10-15 10-20 0z" fill="#e6e6e6" /><circle cx="10" cy="8" r="5" fill="#4e2437" /><circle cx="10" cy="8" r="2.500" fill="#e6e6e6" /></svg>
              </h4>
              <div v-for="(r, k) in n.rows" :key="k" class="nr" :class="[r.kind, { gap: r.gap }]">
                <svg v-if="r.sock" class="sock" viewBox="-10 -10 20 20">
                  <circle v-if="r.sock === 'dot'" r="7.300" :fill="r.color" stroke="#0b1219" stroke-width="1.600" />
                  <circle v-else-if="r.sock === 'ring'" r="7.400" :fill="r.color" stroke="#858585" stroke-width="1.600" />
                  <path v-else d="M0-9 9 0 0 9-9 0z" :fill="r.color" stroke="#0b1219" stroke-width="1.400" />
                  <circle v-if="r.sock === 'dia' && r.on" r="2" fill="#0b1219" />
                </svg>
                <template v-if="r.kind === 'field'">
                  <div class="fbox" :class="{ slider: r.fill }"><i v-if="r.fill" :style="{ width: r.fill + '%' }" /><span>{{ r.label }}</span><em>{{ r.value }}</em></div>
                </template>
                <template v-else-if="r.kind === 'drop'">
                  <div class="dbox"><span>{{ r.label }}</span><svg class="dc"><use href="#chev" /></svg></div>
                </template>
                <template v-else-if="r.kind === 'check'">
                  <div class="cbox" :class="{ on: r.on }"><svg v-if="r.on" viewBox="0 0 18 18"><path d="m3 9.500 4 4.500 8-10" /></svg></div><span>{{ r.label }}</span>
                </template>
                <span v-else>{{ r.label }}</span>
              </div>
              <div v-if="n.vec" class="vec"><p v-for="v in n.vec" :key="v[0]"><span>{{ v[0] }}</span><em>{{ v[1] }}</em></p></div>
            </article>

            <div class="scroll" />
          </div>

          <aside class="side">
            <div class="card">
              <h2><svg class="hc2" viewBox="0 0 18 12"><path d="m1 1 8 9 8-9" /></svg>活动工具<i class="grip" /></h2>
              <div class="cbody">
                <div class="active"><svg><use href="#t-box" /></svg><span>框选</span></div>
                <div class="modes"><span v-for="(s, k) in selectModes.slice(0, 3)" :key="s" :class="{ cur: k === 0 }"><svg class="i"><use :href="'#' + s" /></svg></span></div>
              </div>
            </div>
          </aside>
        </div>
        <div class="under" />
      </section>
    </main>
  </div>
</template>

<style>
body { margin: 0; overflow: hidden; background: #0a1015; }
</style>

<style scoped>
* { box-sizing: border-box; }
.app {
  width: 2485px; height: 1957px; overflow: hidden; display: flex; background: #0a0f14;
  font: 22px/1 Inter, "Noto Sans CJK SC", sans-serif; color: #e2e2e2;
}
.defs { position: absolute; }
p, h2, h3, h4 { margin: 0; font-weight: 400; }
em, i { font-style: normal; }
button { border: 0; padding: 0; margin: 0; font: inherit; color: inherit; }
svg { display: block; flex: none; }
.i { width: 28px; height: 28px; overflow: visible; }
.c { width: 14px; height: 10px; color: #e2e2e2; }

.strip {
  width: 5px; margin-top: 8px; flex: none; border-radius: 0 6px 0 0;
  background:
    linear-gradient(#13212a 50px, #1b222b 50px 91px, #22262f 91px 131px, #1a415c 131px 171px, #2b4270 171px 211px, transparent 211px),
    repeating-linear-gradient(#20252e 0 11px, #1b2028 11px 51px, #20252e 51px 80px);
}
.editors { flex: none; width: 2473px; margin-left: 7px; display: flex; flex-direction: column; gap: 7px; padding-top: 8px; }

/* viewport */
.viewport { position: relative; height: 1016px; flex: none; background: #14181d; border-radius: 10px 0 0 10px; overflow: hidden; }
.scene { position: absolute; inset: 0; width: 2473px; height: 1016px; }
.sel { fill: none; stroke: #8adeff; stroke-width: 4; stroke-linejoin: round; vector-effect: non-scaling-stroke; }
.axis text { font: 600 21px Inter, sans-serif; text-anchor: middle; }
.row { position: relative; display: flex; align-items: center; height: 36px; white-space: nowrap; }
.row > *, .nhead > * { flex: none; }
.r1 { margin: 6px 0 0 17px; }
.r2 { margin: 16px 0 0 16px; }

.b {
  flex: none; height: 36px; display: flex; align-items: center; justify-content: space-between; background: #04070b; border-radius: 6px;
  padding: 0 5px 0 8px; text-shadow: 0 1px 2px #000; box-shadow: 0 1px 1px #0a0e14;
}
.w60 { width: 60px; } .w62 { width: 62px; padding: 0 7px 0 6px; } .w37 { width: 37px; } .w38 { width: 38px; } .w39 { width: 40px; }
.g4 { margin-left: 4px; } .g12 { margin-left: 12px; } .g13 { margin-left: 13px; } .g14 { margin-left: 14px; }
.b.w37, .b.w38, .b.w39, .b.navy, .b.outlined { padding: 0; justify-content: center; }
.b.on { background: #26446c; }
.b.left { border-radius: 6px 0 0 6px; }
.b.right { border-radius: 0 6px 6px 0; margin-left: 1px; }
.b.navy { width: 38.500px; height: 40px; background: #1a2030; }
.b.dim { color: #85888e; }
.b.faint { background: #0d1014; }
.b.faint .c { color: #45484c; }
.mode { width: 172px; margin-left: 14px; padding: 0 5px 0 8px; }
.mode span { margin-right: 2px; }
.menus { display: flex; gap: 4px; margin-left: 14px; }
.menus button { width: 70px; height: 36px; border-radius: 6px; background: #1b2430; text-align: center; text-shadow: 0 1px 2px #000; }
.dropper { margin-left: 319px; height: 42px; background: #0d1117; border: 2px solid #1a2230; justify-content: center; padding: 0; }
.fake { width: 37px; height: 33px; margin-left: 2px; border: 2.500px solid #e8e8e8; border-radius: 6px; background: #182530; font-size: 23px; }
.orient { width: 120px; margin-left: 35px; padding-right: 4px; }
.orient span { margin-left: 4px; }
.vis { margin-left: 430px; padding-left: 4px; }
.outlined { width: 39px; height: 40px; border: 2px solid #1a2230; background: #12161b; }
.shading { display: flex; gap: 1px; margin-left: 11px; }
.shading span { flex: none; width: 37px; height: 38px; background: #0d0f11; display: flex; align-items: center; justify-content: center; }
.shading span:first-child { border-radius: 6px 0 0 6px; width: 38px; }
.shading .cur { background: #1a3347; }
.shading .last { background: #04070b; }

.modes { display: flex; gap: 2px; background: #1a1a19; border-radius: 7px; box-shadow: 0 0 0 1.500px #1a1a19; width: max-content; overflow: hidden; }
.modes span { flex: none; width: 36px; height: 36px; background: #0a0b0c; display: flex; align-items: center; justify-content: center; }
.modes .cur { background: #1a3449; }
.options { width: 90px; margin-left: 1217px; padding: 0 5px 0 15px; }
.xyz { display: flex; gap: 1.500px; margin-left: 14px; background: #060a10; border-radius: 7px; overflow: hidden; }
.xyz span { flex: none; width: 53px; height: 36px; background: #26446c; text-align: center; line-height: 36px; }
.xyz i { flex: none; width: 41px; height: 36px; background: #05070b; display: flex; align-items: center; justify-content: center; }
.cats { display: flex; gap: 2px; margin-left: 22px; padding: 2px; height: 40px; width: 640px; background: #1a2230; border-radius: 8px; overflow: hidden; }
.cats span { flex: 1; background: #0b1118; display: flex; align-items: center; justify-content: center; }
.cats .cur { background: #26446c; }
.cats .i { transform: scale(.96); }
.edge { width: 40px; padding: 0 0 0 4px; margin-left: 15px; background: #0c0f13; }

.stage { position: relative; display: flex; align-items: flex-start; margin-top: 24px; padding-left: 14px; }
.tools { display: flex; flex-direction: column; gap: 10.200px; }
.tgroup { width: 79px; flex: none; border: 2px solid #213447; border-radius: 9px; background: #131b21; overflow: hidden; display: flex; flex-direction: column; }
.tool { position: relative; height: 66.400px; flex: none; display: flex; align-items: center; justify-content: center; }
.tool + .tool { border-top: 2px solid #213447; height: 69.400px; }
.tool svg { width: 56px; height: 56px; }
.tool.on { background: #2d4c66; }
.tool.more::after { content: ""; position: absolute; right: 4px; bottom: 4px; border: 4px solid transparent; border-right-color: #a0a4a8; border-bottom-color: #a0a4a8; }
.info { margin: 5px 0 0 35px; text-shadow: 0 1px 2px #000, 0 0 2px #000; color: #e6e6e6; }
.info p { height: 35px; line-height: 24px; white-space: pre; }
.info .wide { letter-spacing: .4px; }
.info b { font-weight: 400; }
.navbtns { margin: 167px -23px 0 auto; display: flex; flex-direction: column; gap: 4.300px; }
.navbtns span { width: 56px; height: 56px; border-radius: 50%; background: #0f1115; display: flex; align-items: center; justify-content: center; }
.navbtns .warm { background: #1a1b1c; }
.navbtns .far { margin-top: 75px; }
.navbtns .i { width: 31px; height: 31px; }

/* node editor */
.nodeed { height: 926px; display: flex; flex-direction: column; background: #131b22; border-radius: 10px 0 0 0; overflow: hidden; }
.nhead { height: 50px; flex: none; display: flex; align-items: center; padding-left: 15px; background: #1c2933; white-space: nowrap; }
.modifier { width: 134px; margin-left: 12px; padding: 0 6px 0 14px; }
.nmenus { display: flex; gap: 30px; margin-left: 26px; text-shadow: 0 1px 2px #000; }
.idblock { display: flex; gap: 1px; align-items: center; width: 347px; margin-left: 519px; border-radius: 7px; overflow: hidden; background: #151c24; }
.idblock span { flex: none; height: 36px; display: flex; align-items: center; justify-content: center; background: #0b0f14; width: 38.500px; }
.idblock .pick { width: 61px; background: #04070b; justify-content: space-between; padding: 0 5px 0 8px; }
.idblock .name { width: 165px; height: 40px; background: #0a0d14; color: #fff; text-shadow: 0 1px 2px #000; letter-spacing: .3px; }
.idblock .sh { width: 39px; height: 40px; background: #1a2030; }
.pin { margin-left: 18px; }
.up { width: 36px; margin-left: 701px; background: #14202a; padding: 0; justify-content: center; }
.b.nfilter { margin-left: 35px; width: 40px; }
.nhead .edge { margin-left: 14px; }

.nbody { height: 873px; display: flex; flex: none; }
.ntools { width: 109px; padding: 16px 0 0 14px; background: #0f171d; display: flex; flex-direction: column; gap: 10.500px; }
.ntools .tool { height: 65.500px; }
.canvas { position: relative; width: 1841px; overflow: hidden; background: #131b22; }
.under { height: 3px; width: 1950px; background: #1c2933; flex: none; }
.crumbs { display: flex; align-items: center; height: 28px; margin: 30px 0 0 37px; text-shadow: 0 1px 2px #000; letter-spacing: .4px; }
.crumbs span { margin-left: 18px; }
.crumbs .tight { letter-spacing: 0; }
.crumbs .tight + .sep { margin-left: 35px; }
.sep { width: 10px; height: 16px; margin: 0 20px 0 36px; }
.sep path, .hc path, .hc2 path { fill: none; stroke: #dcdcdc; stroke-width: 1.800; }
.stray { position: absolute; left: 1243px; top: -40px; width: 215px; height: 54px; background: #1b2636; border-radius: 6px; box-shadow: 0 3px 12px #0009; }
.frame { position: absolute; left: 231px; top: 313px; width: 591px; height: 538px; background: #1a1b1c; border-radius: 7px; box-shadow: 0 3px 14px #0008; }
.frame h3 { text-align: center; font-size: 30px; line-height: 36px; padding-top: 25px; color: #b0b0b0; }
.links { position: absolute; left: 0; top: 0; width: 1841px; height: 873px; }

.node {
  position: absolute; width: 215px; background: #1b2635; border-radius: 6px; font-size: 17px; color: #e4e4e4; white-space: nowrap;
  box-shadow: 0 0 0 1.500px #0a121b, 0 4px 14px #000a; text-shadow: 0 1px 2px #000a; line-height: 20px;
}
.node h4 { position: relative; height: 32px; display: flex; align-items: center; padding: 0 0 1px 16px; font-size: 17px; border-radius: 6px 6px 0 0; margin-bottom: 5px; border-bottom: 1px solid #0003; }
.hc { width: 15px; height: 11px; margin-right: 8px; }
.eye { width: 20px; height: 16px; margin-left: auto; margin-right: 14px; }
.plain h4 { background: #1c232b; }
.teal h4 { background: #13645c; }
.wine h4 { background: #4e2437; }
.rust h4 { background: #683e34; }
.blue h4 { background: #203770; }
.rust, .blue { background: #1b2631; }
.nr { position: relative; height: 33.500px; display: flex; align-items: center; padding: 0 17px; }
.nr > span { position: relative; top: -1px; }
.nr.out { justify-content: flex-end; padding-right: 18.500px; }
.nr.gap { margin-top: 5px; }
.nr.drop.gap { margin-top: 6px; }
.sock { position: absolute; left: -10px; top: 6.700px; width: 20px; height: 20px; }
.out .sock { left: auto; right: -10px; }
.field { padding: 0 16px 0 15px; }
.fbox { position: relative; flex: 1; height: 30px; display: flex; align-items: center; justify-content: space-between; padding: 0 22px 1px 24px; background: #10141e; border-radius: 4px; box-shadow: 0 1px 1px #232d3c66; overflow: hidden; }
.fbox span, .fbox em { position: relative; }
.fbox em { letter-spacing: .3px; }
.slider { background: #080c12; }
.slider i { position: absolute; left: 1.500px; top: 2px; bottom: 2px; background: #1a364c; border-radius: 3px 0 0 3px; }
.nr.drop, .nr.check { height: 38px; }
.wine .drop { height: 38.500px; }
.dbox { flex: 1; height: 28px; display: flex; align-items: center; justify-content: space-between; padding: 0 3px 2px 10px; background: #04070b; border-radius: 4px; box-shadow: 0 0 0 1.500px #141c26; }
.dc { width: 11px; height: 8px; position: relative; top: 2px; }
.cbox { width: 19px; height: 19px; margin-right: 7px; background: #0b0b0b; box-shadow: 0 0 0 1.500px #1c1c1c; border-radius: 3px; }
.cbox.on { background: #26446c; }
.cbox path { fill: none; stroke: #fff; stroke-width: 2.400; }
.check + .in { margin-top: -1.300px; }
.blue .check + .in { margin-top: -.500px; }
.vec { margin: -1px 16px 0 15px; height: 91px; background: #10141e; border-radius: 4px; }
.vec p { height: 29.500px; display: flex; align-items: center; justify-content: space-between; padding: 0 22px 0 24px; letter-spacing: .3px; }
.scroll { position: absolute; right: 6px; top: 104px; width: 7px; height: 749px; border-radius: 4px; background: #1d2832; }

.side { width: 523px; background: #0f171e; padding: 4px 0 0 16px; }
.card { width: 492px; height: 182px; border-radius: 8px; background: #1b242d; overflow: hidden; }
.card h2 { height: 50px; display: flex; align-items: center; padding: 4px 13px 0 16px; background: #141b21; font-size: 24px; color: #fff; text-shadow: 0 1px 2px #000; }
.hc2 { width: 18px; height: 12px; margin-right: 11px; }
.grip { width: 21px; height: 11px; margin-left: auto; margin-top: -5px; background: radial-gradient(circle at 1px 1px, #5c6267 1.200px, transparent 1.400px) 0 0 / 6px 6px; }
.cbody { padding: 8px 0 0 18px; }
.active { display: flex; align-items: center; height: 56px; padding-left: 6px; }
.active svg { width: 56px; height: 56px; }
.active span { margin-left: 12px; text-shadow: 0 1px 2px #000; }
.card .modes { margin-top: 14px; }
</style>
